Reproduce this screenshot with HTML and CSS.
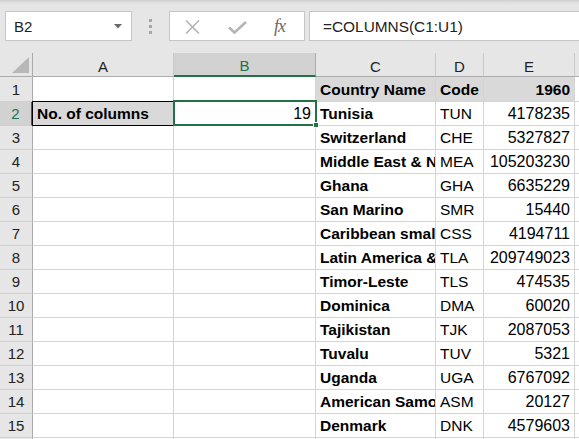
FILE: index.html
```html
<!DOCTYPE html>
<html>
<head>
<meta charset="utf-8">
<link rel="stylesheet" href="styles.css">
</head>
<body>
<div class="toolbar">
  <div class="namebox"><span>B2</span>
    <svg class="dd" width="8" height="5" viewBox="0 0 8 5"><path d="M0 0H8L4 4.5Z" fill="#6b6b6b"/></svg>
  </div>
  <div class="grip"><i></i><i></i><i></i></div>
  <div class="fbtns">
    <svg class="ix" width="15" height="14" viewBox="0 0 15 14"><path d="M1 0.5L14 13.5M14 0.5L1 13.5" stroke="#b4b4b4" stroke-width="1.6" fill="none"/></svg>
    <svg class="ick" width="19" height="13" viewBox="0 0 19 13"><path d="M1 6.5L6.5 11.5L18 1" stroke="#b4b4b4" stroke-width="2.6" fill="none"/></svg>
    <span class="fx">fx</span>
  </div>
  <div class="formula">=COLUMNS(C1:U1)</div>
</div>
<div class="sheet">
  <div class="corner"><svg width="17" height="16" viewBox="0 0 17 16"><path d="M17 0V16H0Z" fill="#b8b8b8"/></svg></div>
  <div class="ch">A</div><div class="ch selc">B</div><div class="ch">C</div><div class="ch">D</div><div class="ch">E</div><div class="ch last"></div>

  <div class="rh">1</div><div class="c"></div><div class="c"></div><div class="c b fill">Country Name</div><div class="c b fill">Code</div><div class="c b fill r">1960</div><div class="c"></div>
  <div class="rh selr">2</div><div class="c b fill a2">No. of columns</div><div class="c r n b2">19<span class="handle"></span></div><div class="c b">Tunisia</div><div class="c">TUN</div><div class="c r n">4178235</div><div class="c"></div>
  <div class="rh">3</div><div class="c"></div><div class="c"></div><div class="c b">Switzerland</div><div class="c">CHE</div><div class="c r n">5327827</div><div class="c"></div>
  <div class="rh">4</div><div class="c"></div><div class="c"></div><div class="c b">Middle East &amp; North Africa</div><div class="c">MEA</div><div class="c r n">105203230</div><div class="c"></div>
  <div class="rh">5</div><div class="c"></div><div class="c"></div><div class="c b">Ghana</div><div class="c">GHA</div><div class="c r n">6635229</div><div class="c"></div>
  <div class="rh">6</div><div class="c"></div><div class="c"></div><div class="c b">San Marino</div><div class="c">SMR</div><div class="c r n">15440</div><div class="c"></div>
  <div class="rh">7</div><div class="c"></div><div class="c"></div><div class="c b">Caribbean small states</div><div class="c">CSS</div><div class="c r n">4194711</div><div class="c"></div>
  <div class="rh">8</div><div class="c"></div><div class="c"></div><div class="c b">Latin America &amp; Caribbean</div><div class="c">TLA</div><div class="c r n">209749023</div><div class="c"></div>
  <div class="rh">9</div><div class="c"></div><div class="c"></div><div class="c b">Timor-Leste</div><div class="c">TLS</div><div class="c r n">474535</div><div class="c"></div>
  <div class="rh">10</div><div class="c"></div><div class="c"></div><div class="c b">Dominica</div><div class="c">DMA</div><div class="c r n">60020</div><div class="c"></div>
  <div class="rh">11</div><div class="c"></div><div class="c"></div><div class="c b">Tajikistan</div><div class="c">TJK</div><div class="c r n">2087053</div><div class="c"></div>
  <div class="rh">12</div><div class="c"></div><div class="c"></div><div class="c b">Tuvalu</div><div class="c">TUV</div><div class="c r n">5321</div><div class="c"></div>
  <div class="rh">13</div><div class="c"></div><div class="c"></div><div class="c b">Uganda</div><div class="c">UGA</div><div class="c r n">6767092</div><div class="c"></div>
  <div class="rh">14</div><div class="c"></div><div class="c"></div><div class="c b">American Samoa</div><div class="c">ASM</div><div class="c r n">20127</div><div class="c"></div>
  <div class="rh">15</div><div class="c"></div><div class="c"></div><div class="c b">Denmark</div><div class="c">DNK</div><div class="c r n">4579603</div><div class="c"></div>
  <div class="rh">16</div><div class="c"></div><div class="c"></div><div class="c b"></div><div class="c"></div><div class="c r n"></div><div class="c"></div>
</div>
</body>
</html>
```
FILE: styles.css
```css
* { box-sizing: border-box; }
html, body { margin: 0; padding: 0; }
body {
  width: 579px;
  height: 439px;
  overflow: hidden;
  background: #fff;
  font-family: "Liberation Sans", Arial, sans-serif;
  color: #000;
}
.toolbar {
  height: 53px;
  display: flex;
  align-items: flex-start;
  padding: 11px 0 0 5px;
  background: linear-gradient(#cfcfcf 0px, #e2e2e2 3px, #e6e6e6 6px, #e6e6e6 100%);
  overflow: hidden;
}
.namebox {
  width: 127px;
  height: 30px;
  flex: none;
  background: #fff;
  border: 1px solid #c6c6c6;
  display: flex;
  align-items: center;
  justify-content: space-between;
  padding: 0 9px 0 8px;
  font-size: 15px;
  color: #222;
}
.namebox span { padding-top: 1px; }
.dd { margin-top: 1px; }
.grip {
  margin-left: 17px;
  width: 3px;
  flex: none;
  display: flex;
  flex-direction: column;
  gap: 3px;
  padding-top: 8px;
}
.grip i { display: block; width: 3px; height: 3px; background: #a6a6a6; }
.fbtns {
  margin-left: 17px;
  width: 136px;
  height: 30px;
  flex: none;
  background: #fff;
  border: 1px solid #c6c6c6;
  display: flex;
  align-items: center;
  padding-left: 15px;
}
.ix { margin-top: 1px; }
.ick { margin-left: 28px; margin-top: 2px; }
.fx {
  margin-left: 27px;
  font-family: "Liberation Serif", "Times New Roman", serif;
  font-style: italic;
  font-size: 18px;
  color: #6a6a6a;
  letter-spacing: -1px;
  margin-top: 1px;
}
.formula {
  margin-left: 4px;
  flex: 1;
  height: 30px;
  margin-right: -5px;
  background: #fff;
  border: 1px solid #c6c6c6;
  display: flex;
  align-items: center;
  padding: 1px 0 0 13px;
  font-size: 15.4px;
  color: #222;
  white-space: nowrap;
}
.sheet {
  display: grid;
  grid-template-columns: 33px 141px 142px 120px 48px 91px 1fr;
  grid-template-rows: 24px 25px repeat(15, 24px);
}
.corner {
  background: #e6e6e6;
  border-right: 1px solid #ababab;
  border-bottom: 1px solid #ababab;
  display: flex;
  align-items: flex-end;
  justify-content: flex-end;
  padding: 0 3px 3px 0;
}
.ch {
  background: #e6e6e6;
  border-right: 1px solid #c9c9c9;
  border-bottom: 1px solid #ababab;
  display: flex;
  align-items: center;
  justify-content: center;
  padding-top: 3px;
  font-size: 15px;
  color: #222;
}
.ch.last { border-right: none; }
.ch.selc {
  background: #d2d2d2;
  color: #217346;
  border-bottom: 2px solid #217346;
  border-right-color: #ababab;
}
.rh {
  background: #e6e6e6;
  border-right: 1px solid #ababab;
  border-bottom: 1px solid #d0d0d0;
  display: flex;
  align-items: flex-end;
  justify-content: center;
  padding-bottom: 3px;
  font-size: 15px;
  line-height: 17px;
  color: #222;
}
.rh.selr {
  background: #d2d2d2;
  color: #217346;
  border-right: 2px solid #217346;
}
.c {
  position: relative;
  border-right: 1px solid #d4d4d4;
  border-bottom: 1px solid #d4d4d4;
  display: flex;
  align-items: flex-end;
  padding: 0 4px 2px 4px;
  font-size: 15.5px;
  line-height: 18px;
  white-space: nowrap;
  overflow: hidden;
}
.c.b { font-weight: bold; }
.c.r { justify-content: flex-end; padding-right: 4px; }
.c.n { font-size: 16px; }
.c.fill { background: #d9d9d9; }
.a2 { overflow: visible; }
.a2::after {
  content: "";
  position: absolute;
  top: -1px;
  left: -1px;
  right: -1px;
  bottom: -1px;
  border: 1px solid #000;
  pointer-events: none;
}
.b2 { overflow: visible; z-index: 2; padding-right: 4px; }
.b2::after {
  content: "";
  position: absolute;
  top: -2px;
  left: -1px;
  right: -2px;
  bottom: -1px;
  border: 2px solid #217346;
  pointer-events: none;
}
.handle {
  position: absolute;
  right: -4px;
  bottom: -3px;
  width: 6px;
  height: 6px;
  background: #217346;
  border: 1px solid #fff;
  z-index: 3;
}
```
